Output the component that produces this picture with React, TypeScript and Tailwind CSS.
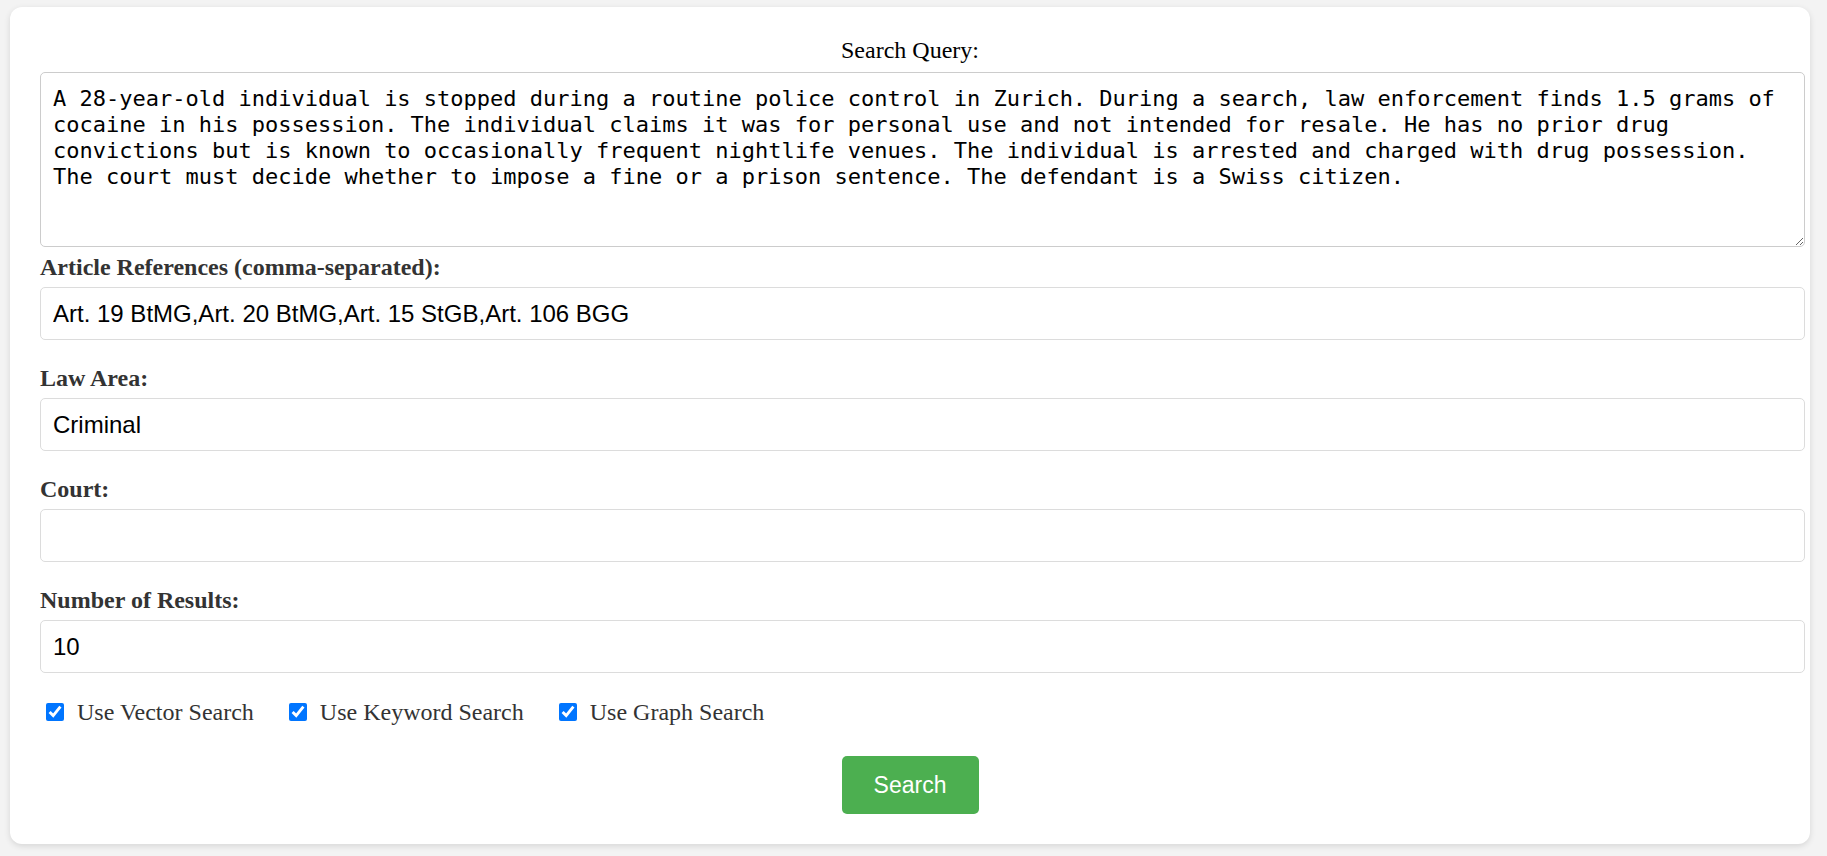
import React from "react";

const queryText =
  "A 28-year-old individual is stopped during a routine police control in Zurich. During a search, law enforcement finds 1.5 grams of cocaine in his possession. The individual claims it was for personal use and not intended for resale. He has no prior drug convictions but is known to occasionally frequent nightlife venues. The individual is arrested and charged with drug possession. The court must decide whether to impose a fine or a prison sentence. The defendant is a Swiss citizen.";

function Field({ label, value }: { label: string; value: string }) {
  return (
    <div className="flex flex-col">
      <label className="block font-['Liberation_Serif',serif] text-[24px] leading-[28px] font-bold text-[#333] mb-[6px]">
        {label}
      </label>
      <input
        type="text"
        defaultValue={value}
        className="block w-full h-[53px] border border-[#dcdcdc] rounded-[5px] px-[12px] font-['Liberation_Sans',Arial,sans-serif] text-[24px] text-black bg-white outline-none mb-[24px]"
      />
    </div>
  );
}

function Check({ label }: { label: string }) {
  return (
    <label className="flex items-center font-['Liberation_Serif',serif] text-[24px] leading-[28px] text-[#333]">
      <input type="checkbox" defaultChecked className="w-[18px] h-[18px] m-0 accent-[#0075ff]" />
      <span className="ml-[13px]">{label}</span>
    </label>
  );
}

export default function App() {
  return (
    <div className="min-h-[856px] w-full bg-[#f3f3f3] pt-[7px] pb-[13px]">
      <div className="ml-[10px] w-[1800px] bg-white rounded-[12px] shadow-[0_2px_6px_rgba(0,0,0,0.12)] pl-[30px] pr-[5px] pt-[30px] pb-[30px]">
        <div className="pr-[25px] text-center font-['Liberation_Serif',serif] text-[24px] leading-[27px] text-black mb-[8px]">
          Search Query:
        </div>
        <textarea
          defaultValue={queryText}
          className="block w-full h-[175px] border border-[#cccccc] rounded-[5px] px-[12px] pt-[13px] pb-[12px] font-['DejaVu_Sans_Mono',monospace] text-[22px] leading-[26px] text-black bg-white outline-none mb-[6px]"
        />
        <Field label="Article References (comma-separated):" value="Art. 19 BtMG,Art. 20 BtMG,Art. 15 StGB,Art. 106 BGG" />
        <Field label="Law Area:" value="Criminal" />
        <Field label="Court:" value="" />
        <Field label="Number of Results:" value="10" />
        <div className="flex items-center pl-[6px] h-[28px] mt-[1px] gap-[35px]">
          <Check label="Use Vector Search" />
          <Check label="Use Keyword Search" />
          <Check label="Use Graph Search" />
        </div>
        <div className="pr-[25px] flex justify-center mt-[30px]">
          <button className="w-[137px] h-[58px] bg-[#4caf50] rounded-[5px] text-white font-['Liberation_Sans',Arial,sans-serif] text-[23px]">
            Search
          </button>
        </div>
      </div>
    </div>
  );
}
